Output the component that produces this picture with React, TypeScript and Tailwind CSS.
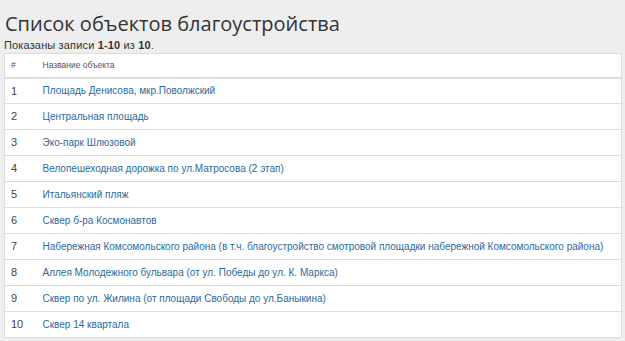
const objects = [
  "Площадь Денисова, мкр.Поволжский",
  "Центральная площадь",
  "Эко-парк Шлюзовой",
  "Велопешеходная дорожка по ул.Матросова (2 этап)",
  "Итальянский пляж",
  "Сквер б-ра Космонавтов",
  "Набережная Комсомольского района (в т.ч. благоустройство смотровой площадки набережной Комсомольского района)",
  "Аллея Молодежного бульвара (от ул. Победы до ул. К. Маркса)",
  "Сквер по ул. Жилина (от площади Свободы до ул.Баныкина)",
  "Сквер 14 квартала",
]

export default function App() {
  return (
    <div className="min-h-[341px] bg-[#eeeeee] pl-[4px] pt-[11px] font-['Liberation_Sans',sans-serif] text-[#333]">
      <h1 className="pl-[1px] font-['Open_Sans',sans-serif] text-[20px] leading-[26px] text-[#333]">
        Список объектов благоустройства
      </h1>
      <div className="mt-[2px] text-[11px] leading-[12px] tracking-[0.15px] text-[#333]">
        Показаны записи <b className="font-semibold">1-10</b> из <b className="font-semibold">10</b>.
      </div>
      <table className="mt-[2px] w-[618px] table-fixed border-collapse border border-[#dddddd] bg-white text-[10px]">
        <colgroup>
          <col className="w-[38px]" />
          <col />
        </colgroup>
        <thead>
          <tr className="h-[24px] border-b-2 border-[#dddddd] text-[8.5px] text-[#555]">
            <th className="pl-[6px] text-left font-normal">#</th>
            <th className="text-left font-normal">Название объекта</th>
          </tr>
        </thead>
        <tbody>
          {objects.map((name, i) => (
            <tr key={i} className="h-[26px] border-t border-[#dddddd]">
              <td className="pl-[6px] text-[11px] text-[#444]">{i + 1}</td>
              <td className="whitespace-nowrap text-[#2a6a9e]">
                <a href="#">{name}</a>
              </td>
            </tr>
          ))}
        </tbody>
      </table>
    </div>
  )
}
